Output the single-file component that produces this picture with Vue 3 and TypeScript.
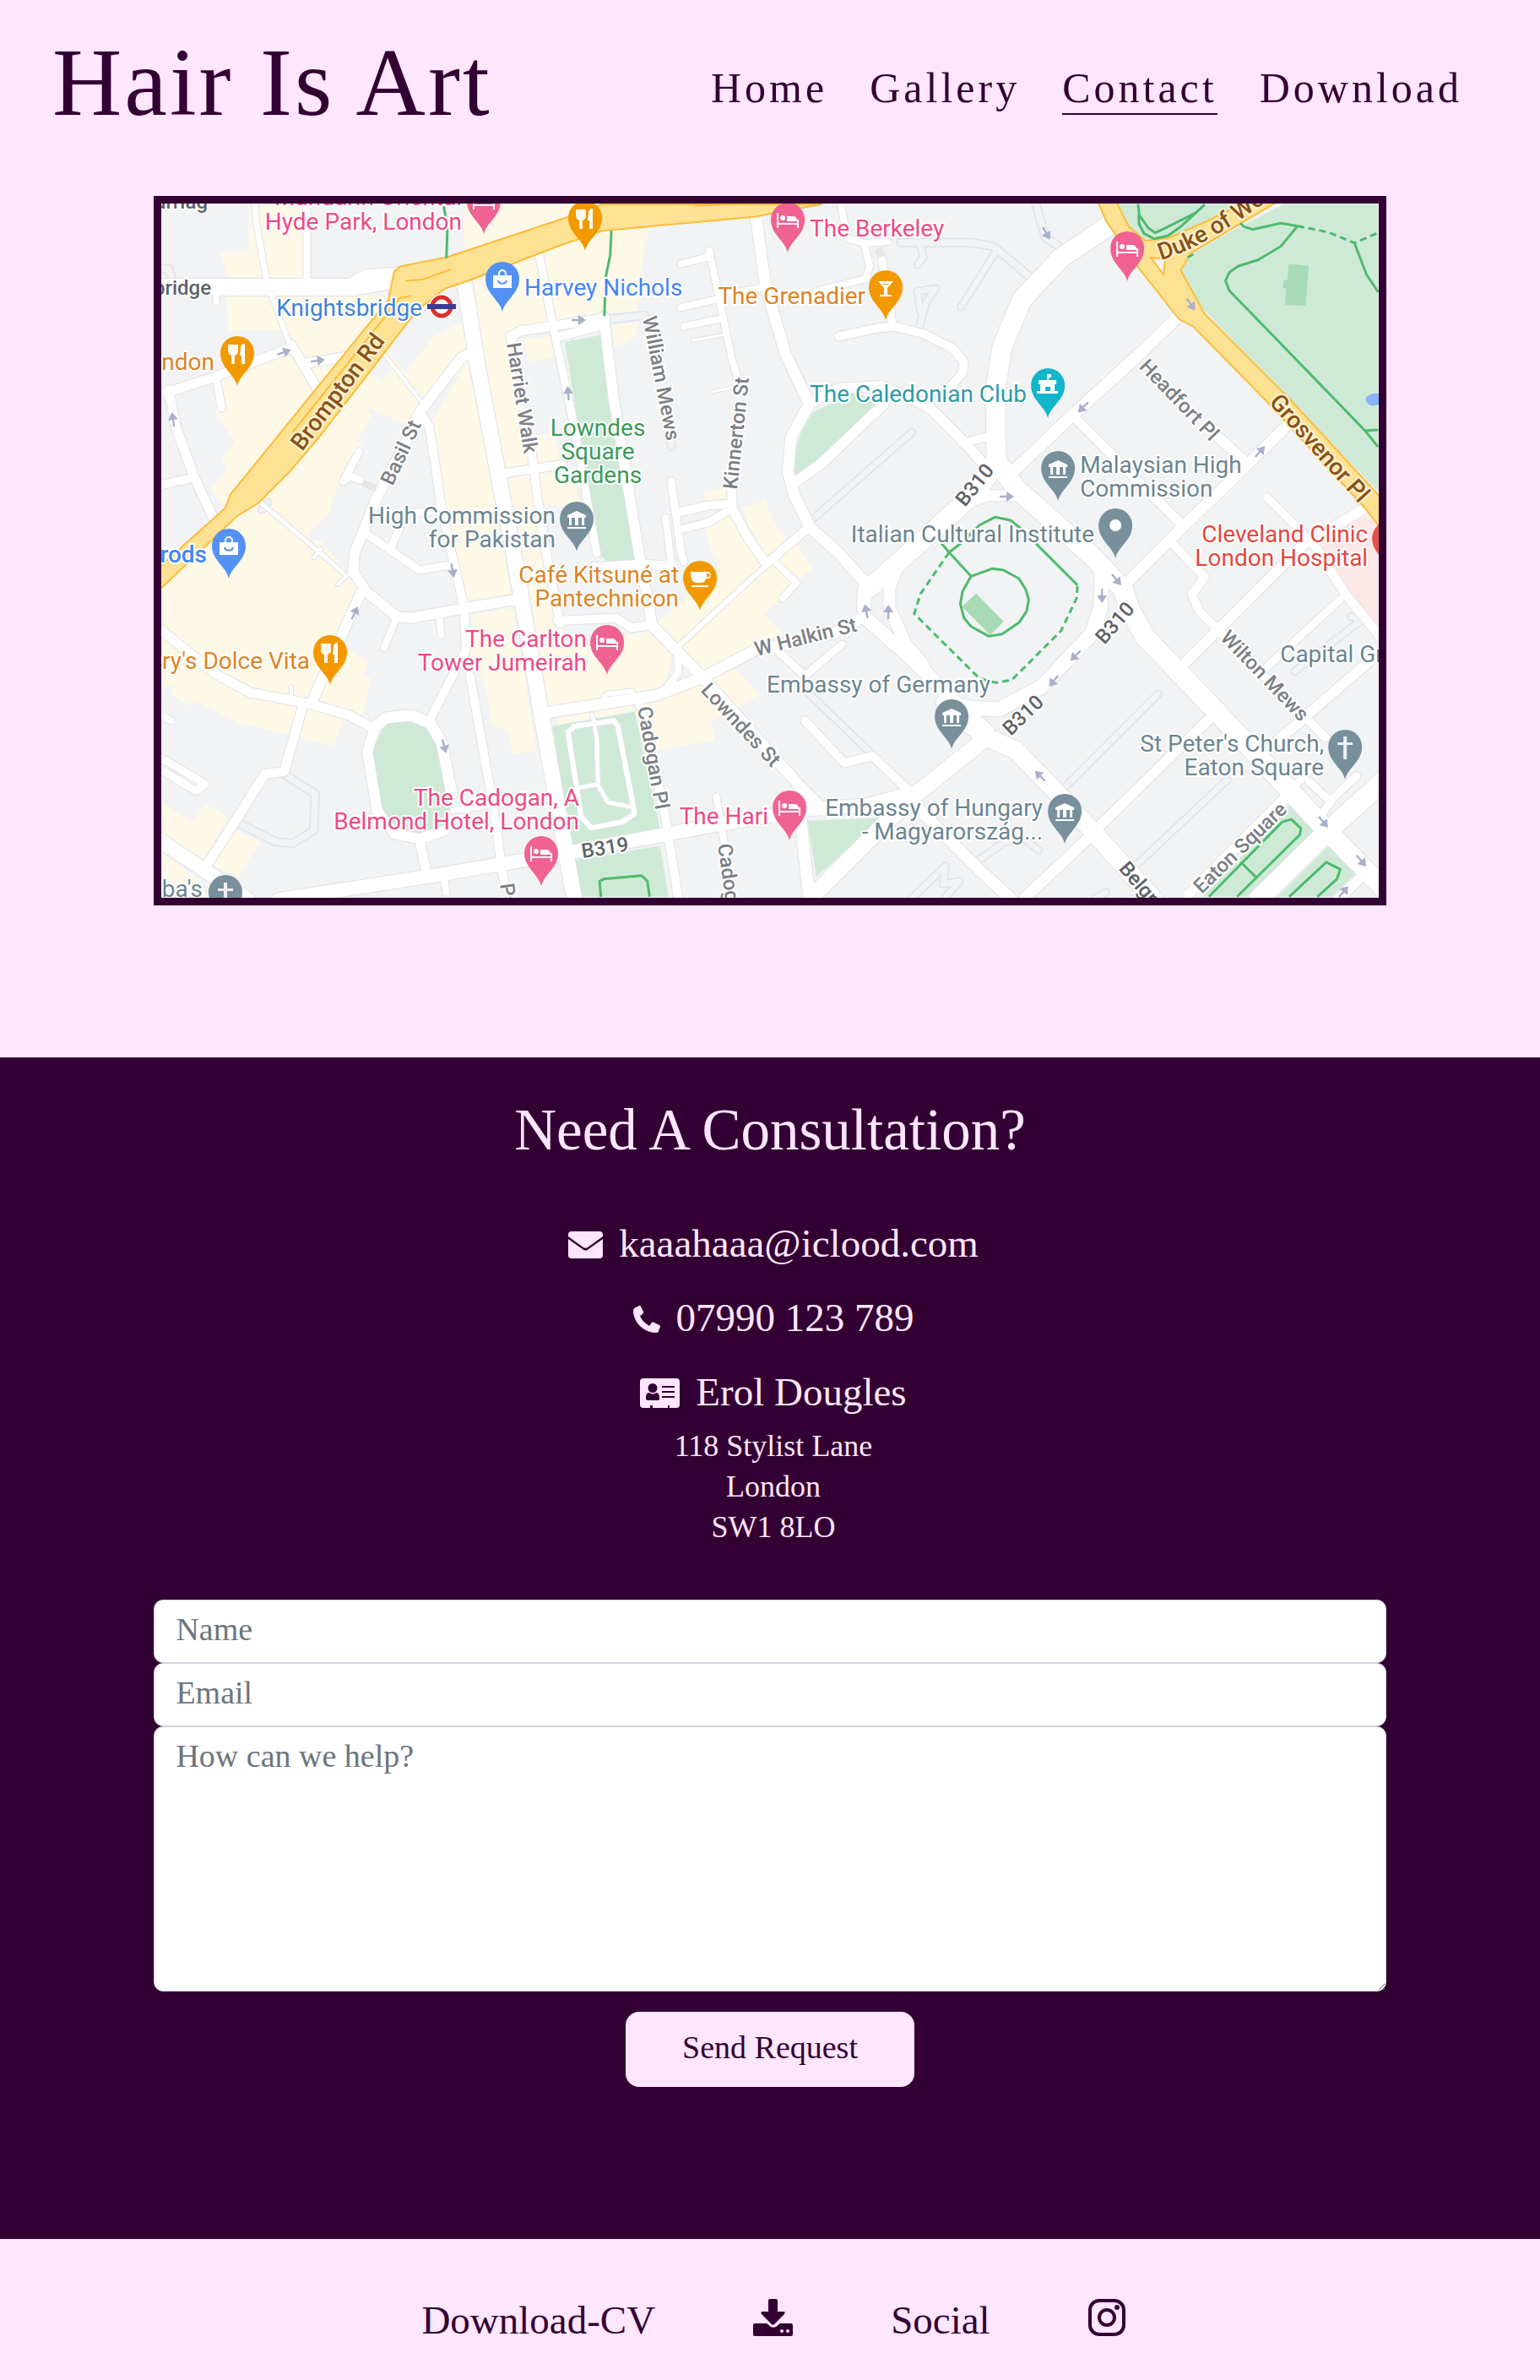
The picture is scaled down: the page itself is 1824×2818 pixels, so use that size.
<script setup lang="ts">
import { reactive } from 'vue'

const navLinks = [
  { label: 'Home', href: '#home', active: false },
  { label: 'Gallery', href: '#gallery', active: false },
  { label: 'Contact', href: '#contact', active: true },
  { label: 'Download', href: '#download', active: false },
]

const form = reactive({ name: '', email: '', message: '' })

/* The map is drafted on six sheets, three sheet units to one map unit. */
type Sheet = 'A' | 'B' | 'C' | 'D' | 'E' | 'F'
const origins: Record<Sheet, [number, number]> = {
  A: [180, 225],
  B: [660, 225],
  C: [1150, 225],
  D: [180, 640],
  E: [660, 640],
  F: [1150, 640],
}

function plot(sheet: Sheet, pts: string): string {
  const [ox, oy] = origins[sheet]
  return pts
    .split(' ')
    .map((pair) => {
      const [x, y] = pair.split(',').map(Number)
      return `${Math.round((ox + x / 3) * 10) / 10},${Math.round((oy + y / 3) * 10) / 10}`
    })
    .join(' ')
}

type Shape = [Sheet, string]
type Road = [Sheet, number, string]

const shops: string[] = ([
  ['A', '345,50 535,50 535,320 400,310 270,310 240,220 345,220'],
  ['A', '265,375 830,375 830,400 260,1130 205,1060 270,990 245,960 295,895 225,790 240,680 490,560 470,500 270,500'],
  ['A', '1110,50 1500,50 1500,95 1110,220'],
  ['A', '830,560 900,650 1000,520 1100,470 1130,600 960,800 900,830 760,770 780,800 730,890 750,910 690,1000 640,1100 635,1140 555,1220 600,1290 100,1290 380,1110 600,850 750,640 820,680 850,640'],
  ['A', '990,830 1120,610 1230,1130 1250,1290 1065,1290 1020,1000'],
  ['A', '1140,310 1370,225 1440,200 1500,200 1500,450 1280,505 1270,540 1360,1000 1260,1005 1180,600'],
  ['A', '1320,530 1420,520 1432,595 1335,610'],
  ['A', '1365,870 1430,865 1450,960 1370,975'],
  ['A', '1265,1020 1430,1000 1450,1120 1380,1120 1420,1290 1290,1290'],
  ['B', '0,110 330,140 310,190 300,280 285,430 0,450'],
  ['B', '195,480 290,470 270,530 200,560'],
  ['B', '-10,1030 65,1020 80,1120 0,1125'],
  ['B', '520,1075 600,1060 600,1110 530,1130'],
  ['B', '655,1130 740,1100 760,1160 810,1240 860,1290 720,1290'],
  ['B', '525,1205 610,1150 700,1290 550,1290'],
  ['D', '36,170 210,0 600,0 745,180 660,360 770,430 750,480 780,490 750,615 680,640 645,730 480,690 310,650 150,570 140,590 65,545 75,515 36,530'],
  ['D', '36,930 145,1000 190,935 270,980 180,1140 36,1050'],
  ['D', '300,1030 385,1070 305,1195 210,1150'],
  ['D', '36,1110 160,1200 200,1265 36,1265'],
  ['D', '1075,0 1245,0 1275,190 1110,215'],
  ['D', '1135,265 1285,240 1365,745 1280,760 1265,675 1205,655 1190,530 1130,400'],
  ['D', '1310,0 1395,0 1440,240 1470,370 1780,320 1850,400 1820,530 1410,600'],
  ['E', '360,270 450,200 500,230 710,95 650,0 540,0 575,70 530,160 450,200'],
  ['E', '540,0 650,0 735,90 850,15 905,100 850,150 735,260 800,330 690,385 510,480 340,300 480,190 590,120'],
  ['E', '300,560 510,490 635,455 720,550 545,640 560,710 360,745'],
  ['E', '0,620 290,570 290,600 0,655'],
] as Shape[]).map(([s, p]) => plot(s, p))

const clinics = [plot('C', '1300,1200 1400,1160 1446,1170 1446,1600 1270,1290 1230,1245'), plot('F', '1230,0 1446,0 1446,320 1330,180')]

const parks: string[] = ([
  ['A', '1470,540 1500,530 1500,700'],
  ['B', '28,540 155,515 275,1320 180,1322 145,1290'],
  ['B', '910,790 1050,720 1150,750 840,1035 838,950 870,850'],
  ['C', '515,50 1060,50 840,110 700,170 620,175 560,130'],
  ['C', '1110,50 1446,50 1446,1070 830,430 745,290 780,230 900,160'],
  ['D', '830,650 920,640 980,660 1020,720 1050,880 1060,970 1020,1030 950,1045 870,1020 815,950 780,750'],
  ['D', '1425,660 1500,645 1500,1090'],
  ['E', '150,0 268,0 275,50 180,78'],
  ['E', '-15,660 275,608 365,1020 45,1085'],
  ['E', '60,1135 365,1085 395,1265 90,1265'],
  ['E', '890,995 1150,985 920,1195'],
  ['F', '1140,925 1235,1025 990,1265 820,1265 1110,970'],
  ['F', '1275,1080 1375,1175 1280,1265 1090,1265'],
] as Shape[]).map(([s, p]) => plot(s, p))

const lawns = [
  plot('C', '1128,262 1200,270 1188,412 1116,408 1120,350 1108,348 1110,322 1124,318'),
  plot('F', '18,188 116,288 68,335 -32,235'),
]

const arterials = [
  plot('A', '0,1362 260,1130 280,1080 840,390 860,290 880,272 1050,238 1480,95 1600,50 2380,50 2140,95 1600,145 1440,200 1130,320 1040,350 940,430 600,870 490,1000 380,1110 300,1160 0,1445'),
  plot('C', '450,40 515,40 560,130 620,180 700,170 840,110 980,40 1090,40 780,225 745,285 830,440 1130,740 1500,1140 1500,1260 1400,1130 1050,750 790,485 740,460 590,270 480,110'),
]
const arterialMarks = [
  plot('A', '900,323 960,318 1062,282'),
  plot('A', '920,375 880,385 500,860'),
  plot('B', '485,56 620,50'),
]

const lanes = ([
  ['A', 9, '410,1110 390,1135'],
  ['A', 9, '36,280 60,280 70,310'],
  ['B', 9, '1220,187 1470,187 1550,200 1680,310'],
  ['B', 8, '1290,190 1300,240 1280,265'],
  ['B', 8, '1560,215 1435,415'],
  ['B', 8, '1285,490 1310,400 1345,350 1280,360 1290,430'],
  ['B', 8, '900,1175 1260,860'],
  ['B', 9, '405,910 402,870'],
  ['B', 9, '180,460 310,445'],
  ['C', 9, '230,50 265,170 330,210'],
  ['D', 9, '470,830 580,900 575,1030 500,1075 440,1070 300,1000'],
  ['E', 8, '890,540 1130,770'],
  ['E', 8, '1260,1270 1380,1155 1370,1220 1430,1210 1380,1265'],
  ['F', 8, '330,880 665,545'],
  ['F', 8, '590,1150 910,850'],
  ['F', 8, '20,1140 120,1070 190,1060 240,1100'],
  ['F', 8, '440,1270 480,1250'],
  ['F', 8, '1150,465 1390,280 1350,270'],
] as Road[]).map(([s, w, p]) => ({ w, d: plot(s, p) }))

const roads = ([
  ['A', 20, '0,345 700,345 860,320'],
  ['A', 11, '720,320 760,300 880,290'],
  ['A', 7, '365,50 370,110 405,310'],
  ['A', 6, '425,375 490,550'],
  ['A', 11, '495,550 590,710'],
  ['A', 8, '550,50 550,320'],
  ['A', 7, '228,370 228,400'],
  ['A', 11, '50,720 220,665 495,560'],
  ['A', 11, '550,615 700,590'],
  ['A', 9, '230,680 248,775'],
  ['A', 11, '60,710 85,840 150,1020 220,1170'],
  ['A', 10, '30,1048 150,1020'],
  ['A', 4, '815,570 960,755'],
  ['A', 5, '380,1105 600,1290 690,1370'],
  ['A', 12, '1120,585 1100,595 950,790 900,900 800,1090 720,1290 715,1355 760,1425 870,1515 920,1520 1110,1485 1290,1455'],
  ['A', 10, '960,800 985,840 1010,1000 1030,1140 1065,1290 1110,1485 1115,1635 985,1885'],
  ['A', 9, '735,930 680,1035 700,1015 740,1030'],
  ['A', 18, '1110,330 1160,640 1245,1090 1280,1260 1380,1845 1500,2515'],
  ['A', 9, '1375,225 1425,485 1500,840 1580,1290'],
  ['A', 11, '1280,545 1275,520 1310,500 1610,455'],
  ['A', 10, '1350,940 1370,1100 1400,1290 1450,1540'],
  ['A', 10, '1260,1005 1460,975'],
  ['A', 9, '1020,1140 900,1150 850,1270'],
  ['A', 9, '760,1220 950,1350 1070,1330'],
  ['B', 10, '10,520 160,480'],
  ['B', 12, '165,450 200,740 290,1290 335,1535'],
  ['B', 11, '410,1335 300,1330 130,1340'],
  ['B', 8, '440,262 540,237 540,215 620,600 650,700'],
  ['B', 8, '440,417 580,385'],
  ['B', 8, '450,485 590,455'],
  ['B', 3, '480,535 600,512'],
  ['B', 3, '545,718 630,700'],
  ['B', 11, '620,1060 620,1130 680,1240 740,1325'],
  ['B', 13, '705,90 740,340 810,580 895,760 830,880 820,1000 840,1080 900,1200 1000,1290 1090,1390'],
  ['B', 12, '835,1045 940,970 1160,760'],
  ['B', 12, '895,760 1000,705 1150,695 1290,755 1330,780 1440,890 1540,1000'],
  ['B', 8, '740,345 600,370'],
  ['B', 8, '1008,50 1030,170 1090,190 1175,183'],
  ['B', 8, '1090,190 1110,270 1095,315 920,360'],
  ['B', 9, '1153,245 1190,470'],
  ['B', 10, '1000,520 1140,490 1200,485 1300,510 1400,560 1445,610 1440,650 1360,740'],
  ['B', 9, '405,1035 440,1290 450,1320'],
  ['B', 8, '385,1165 405,1330'],
  ['B', 10, '430,1145 540,1120 620,1115'],
  ['B', 9, '440,1205 540,1180 620,1130'],
  ['B', 10, '740,1330 890,1200'],
  ['C', 23, '485,130 320,240 180,390 110,560 88,700 88,850 90,960 160,1060 330,1210 440,1310 540,1420 570,1500 620,1590 870,1850 1260,2270 1500,2515'],
  ['C', 14, '730,455 590,590 360,800 160,990'],
  ['C', 11, '370,810 750,1190'],
  ['C', 12, '870,870 980,970'],
  ['C', 13, '1130,830 760,1190 550,1400'],
  ['C', 9, '1050,1090 1200,1240'],
  ['C', 12, '1400,1130 1180,1260 750,1690'],
  ['C', 22, '90,970 20,1070 -250,1315 -370,1420'],
  ['C', 13, '-40,1120 60,1085 200,1085'],
  ['C', 10, '-30,900 80,870'],
  ['D', 11, '36,320 220,470 350,540 560,580 700,620 790,670'],
  ['D', 12, '740,190 570,570'],
  ['D', 11, '535,590 470,820 400,830 300,990 190,1160'],
  ['D', 17, '20,1060 200,1180 340,1275'],
  ['D', 13, '790,665 830,630 920,620 990,650 1030,720 1065,900'],
  ['D', 12, '790,670 765,750 800,960 860,1040 950,1060 1040,1030'],
  ['D', 11, '950,1060 975,1180'],
  ['D', 10, '1130,480 1215,960 1245,1180 1250,1210'],
  ['D', 7, '1070,960 1210,940'],
  ['D', 8, '870,270 825,380'],
  ['D', 8, '1020,270 1028,335'],
  ['D', 8, '20,615 70,640'],
  ['D', 9, '20,765 190,865 155,890 20,805'],
  ['D', 4, '495,520 495,560'],
  ['D', 4, '600,30 575,60'],
  ['D', 4, '700,120 660,155'],
  ['D', 16, '450,1275 1000,1190 1500,1105 2000,1010 2330,955 2540,940 2690,900'],
  ['D', 8, '1040,1210 1045,1250'],
  ['E', 10, '0,285 210,275 260,310 335,300'],
  ['E', 13, '-60,615 0,605 350,550 520,485 700,390 980,330 1090,270'],
  ['E', 6, '160,565 175,545 265,535 275,550'],
  ['E', 13, '335,300 520,490 860,870 950,960'],
  ['E', 8, '425,400 430,470 370,545'],
  ['E', 6, '425,380 740,90'],
  ['E', 8, '775,75 850,150 800,205'],
  ['E', 16, '1110,150 1090,200 1090,270 1270,430 1420,580 1530,680'],
  ['E', 14, '1210,90 1180,170 1180,240 1240,370 1300,440'],
  ['E', 19, '1530,700 1500,720 1250,920 900,1270'],
  ['E', 14, '865,990 895,1270'],
  ['E', 10, '290,570 380,960 430,1270'],
  ['E', 8, '565,910 590,1060 620,1260'],
  ['E', 10, '880,640 1020,790 1120,765 1260,900'],
  ['E', 9, '780,390 880,480 1010,370'],
  ['E', 14, '1250,920 1500,1170 1620,1280'],
  ['E', 5, '70,880 145,865'],
  ['E', 5, '125,620 140,700 145,870 180,930 260,945'],
  ['E', 6, '40,680 60,660 200,640 215,660 275,970 230,1000 120,1020 85,980 38,680'],
  ['F', 17, '465,120 460,240 430,330 250,520 100,600 0,595 -100,575'],
  ['F', 21, '-10,650 60,700 160,745 300,890 430,1030 650,1275'],
  ['F', 12, '430,1040 850,630'],
  ['F', 13, '440,1035 190,1270'],
  ['F', 10, '720,15 830,130 785,190 810,250 880,320 1260,700'],
  ['F', 9, '1050,450 1310,210'],
  ['F', 11, '1210,0 1330,190 1460,350'],
  ['F', 12, '1090,710 1460,390'],
  ['F', 9, '1200,855 1275,925 1370,835'],
  ['F', 9, '1150,870 1210,810'],
  ['F', 9, '1280,925 1240,980'],
  ['F', 23, '1470,850 1270,1030 1020,1275'],
  ['F', 12, '1130,900 770,1260'],
  ['F', 12, '1410,1170 1300,1280'],
] as Road[]).map(([s, w, p]) => ({ w, d: plot(s, p) }))

const trails = [
  plot('A', '1035,50 1050,130 1046,242'),
  plot('B', '192,145 188,230 172,310 167,448'),
  plot('C', '593,50 598,90 630,135 655,152 700,130 800,80'),
  plot('C', '596,90 597,120 615,155 650,173 700,162 745,130 830,52'),
  plot('C', '957,118 970,130 1000,140 1100,118 1160,128 1100,200 1020,248 950,270 918,292 904,322 918,358 1100,545 1400,855 1446,912'),
  plot('C', '1400,855 1446,852'),
  plot('C', '1362,188 1405,300 1446,362'),
  plot('E', '1365,10 1392,42 1470,127 1440,180 1432,225 1445,275 1470,305 1533,340 1580,332 1640,292 1668,250 1675,210 1665,175 1640,135 1585,105 1545,100 1470,127'),
  plot('E', '1392,42 1440,5 1500,-55 1555,-83 1610,-72 1650,-40'),
  plot('F', '230,10 378,158'),
  plot('E', '155,1265 150,1210 165,1202 300,1190 320,1210 328,1265'),
  plot('F', '845,1265 1105,1000 1138,990 1172,1022 1168,1045 945,1265'),
  plot('F', '958,1142 1012,1195'),
  plot('F', '1130,1265 1262,1142 1312,1168 1300,1202 1230,1265'),
]
const dashedTrails = [
  plot('C', '1160,128 1270,150 1362,188 1446,152'),
  plot('C', '790,228 760,245'),
  plot('E', '1392,42 1290,190 1268,260 1500,490 1560,505 1615,495 1790,320 1845,205 1848,158'),
]

const arrows: [number, number, number][] = [
  [336, 417, -20], [376, 427, -8], [205, 497, -98], [685, 379, 0], [673, 466, -95],
  [1239, 276, 60], [1410, 360, 55], [1283, 482, 135], [1492, 535, -48], [1192, 588, 0],
  [420, 726, -65], [536, 675, 80], [526, 883, 75], [1026, 724, -100], [1052, 725, -90],
  [1305, 705, 90], [1322, 686, 50], [1274, 776, 135], [1248, 806, 130], [1232, 919, -135],
  [1567, 973, 50], [1612, 1019, 50], [1591, 1056, -50],
]

type PinKind = 'fork' | 'bed' | 'bag' | 'glass' | 'cup' | 'castle' | 'bank' | 'dot' | 'cross' | 'plus' | 'none'
const orange = '#f29900'
const pink = '#f06292'
const blue = '#5491f5'
const slate = '#78909c'
const pins: { x: number; y: number; kind: PinKind; fill: string }[] = [
  { x: 281, y: 418, kind: 'fork', fill: orange },
  { x: 693, y: 258, kind: 'fork', fill: orange },
  { x: 391, y: 772, kind: 'fork', fill: orange },
  { x: 573, y: 238, kind: 'bed', fill: pink },
  { x: 933, y: 260, kind: 'bed', fill: pink },
  { x: 1335, y: 294, kind: 'bed', fill: pink },
  { x: 719, y: 760, kind: 'bed', fill: pink },
  { x: 641, y: 1010, kind: 'bed', fill: pink },
  { x: 935, y: 956, kind: 'bed', fill: pink },
  { x: 595, y: 330, kind: 'bag', fill: blue },
  { x: 271, y: 646, kind: 'bag', fill: blue },
  { x: 1049, y: 340, kind: 'glass', fill: orange },
  { x: 829, y: 684, kind: 'cup', fill: orange },
  { x: 1241, y: 456, kind: 'castle', fill: '#12b5cb' },
  { x: 683, y: 614, kind: 'bank', fill: slate },
  { x: 1253, y: 554, kind: 'bank', fill: slate },
  { x: 1127, y: 848, kind: 'bank', fill: slate },
  { x: 1261, y: 960, kind: 'bank', fill: slate },
  { x: 1321, y: 622, kind: 'dot', fill: slate },
  { x: 1593, y: 884, kind: 'cross', fill: slate },
  { x: 267, y: 1056, kind: 'plus', fill: slate },
  { x: 1645, y: 637, kind: 'none', fill: '#e0524a' },
]

type Anchor = 'start' | 'middle' | 'end'
const places: { x: number; y: number; at: Anchor; tone: string; text: string }[] = [
  { x: 547, y: 243, at: 'end', tone: 'hotel', text: 'Mandarin Oriental' },
  { x: 547, y: 272, at: 'end', tone: 'hotel', text: 'Hyde Park, London' },
  { x: 500, y: 374, at: 'end', tone: 'station', text: 'Knightsbridge' },
  { x: 254, y: 438, at: 'end', tone: 'food', text: 'London' },
  { x: 621, y: 350, at: 'start', tone: 'shop', text: 'Harvey Nichols' },
  { x: 959, y: 280, at: 'start', tone: 'hotel', text: 'The Berkeley' },
  { x: 1025, y: 360, at: 'end', tone: 'food', text: 'The Grenadier' },
  { x: 959, y: 476, at: 'start', tone: 'sight', text: 'The Caledonian Club' },
  { x: 708, y: 516, at: 'middle', tone: 'park', text: 'Lowndes' },
  { x: 708, y: 544, at: 'middle', tone: 'park', text: 'Square' },
  { x: 708, y: 572, at: 'middle', tone: 'park', text: 'Gardens' },
  { x: 658, y: 620, at: 'end', tone: 'civic', text: 'High Commission' },
  { x: 658, y: 648, at: 'end', tone: 'civic', text: 'for Pakistan' },
  { x: 1279, y: 560, at: 'start', tone: 'civic', text: 'Malaysian High' },
  { x: 1279, y: 588, at: 'start', tone: 'civic', text: 'Commission' },
  { x: 1296, y: 642, at: 'end', tone: 'civic', text: 'Italian Cultural Institute' },
  { x: 1620, y: 642, at: 'end', tone: 'medical', text: 'Cleveland Clinic' },
  { x: 1620, y: 670, at: 'end', tone: 'medical', text: 'London Hospital' },
  { x: 245, y: 666, at: 'end', tone: 'shop strong', text: 'Harrods' },
  { x: 804, y: 690, at: 'end', tone: 'food', text: 'Café Kitsuné at' },
  { x: 804, y: 718, at: 'end', tone: 'food', text: 'Pantechnicon' },
  { x: 695, y: 766, at: 'end', tone: 'hotel', text: 'The Carlton' },
  { x: 695, y: 794, at: 'end', tone: 'hotel', text: 'Tower Jumeirah' },
  { x: 367, y: 792, at: 'end', tone: 'food', text: "ry's Dolce Vita" },
  { x: 686, y: 954, at: 'end', tone: 'hotel', text: 'The Cadogan, A' },
  { x: 686, y: 982, at: 'end', tone: 'hotel', text: 'Belmond Hotel, London' },
  { x: 910, y: 976, at: 'end', tone: 'hotel', text: 'The Hari' },
  { x: 1173, y: 820, at: 'end', tone: 'civic', text: 'Embassy of Germany' },
  { x: 1235, y: 966, at: 'end', tone: 'civic', text: 'Embassy of Hungary' },
  { x: 1235, y: 994, at: 'end', tone: 'civic', text: '- Magyarország...' },
  { x: 1568, y: 890, at: 'end', tone: 'civic', text: "St Peter's Church," },
  { x: 1568, y: 918, at: 'end', tone: 'civic', text: 'Eaton Square' },
  { x: 1516, y: 784, at: 'start', tone: 'civic', text: 'Capital Gr' },
  { x: 240, y: 1062, at: 'end', tone: 'civic', text: "ba's" },
]

const streets: { x: number; y: number; r: number; tone: string; text: string }[] = [
  { x: 358, y: 535, r: -53, tone: 'main', text: 'Brompton Rd' },
  { x: 1502, y: 477, r: 48, tone: 'main', text: 'Grosvenor Pl' },
  { x: 465, y: 576, r: -65, tone: 'side', text: 'Basil St' },
  { x: 600, y: 407, r: 81, tone: 'side', text: 'Harriet Walk' },
  { x: 761, y: 376, r: 79, tone: 'side', text: 'William Mews' },
  { x: 873, y: 580, r: -84, tone: 'side', text: 'Kinnerton St' },
  { x: 1348, y: 435, r: 46, tone: 'side', text: 'Headfort Pl' },
  { x: 896, y: 777, r: -14, tone: 'side', text: 'W Halkin St' },
  { x: 829, y: 818, r: 47, tone: 'side', text: 'Lowndes St' },
  { x: 755, y: 838, r: 80, tone: 'side', text: 'Cadogan Pl' },
  { x: 850, y: 1000, r: 82, tone: 'side', text: 'Cadogan' },
  { x: 592, y: 1047, r: 82, tone: 'side', text: 'Pavilion' },
  { x: 1444, y: 756, r: 46, tone: 'side', text: 'Wilton Mews' },
  { x: 1423, y: 1059, r: -44, tone: 'side', text: 'Eaton Square' },
  { x: 1324, y: 1029, r: 49, tone: 'route', text: 'Belgrave' },
  { x: 690, y: 1016, r: -9, tone: 'route', text: 'B319' },
  { x: 1143, y: 601, r: -51, tone: 'route', text: 'B310' },
  { x: 1308, y: 764, r: -49, tone: 'route', text: 'B310' },
  { x: 1197, y: 872, r: -44, tone: 'route', text: 'B310' },
]
</script>

<template>
  <div class="page">
    <header class="top">
      <h1 class="brand">Hair Is Art</h1>
      <nav class="nav" aria-label="Main">
        <a v-for="link in navLinks" :key="link.label" :href="link.href" :class="['nav-link', { active: link.active }]">{{ link.label }}</a>
      </nav>
    </header>

    <main>
      <section class="map" aria-label="Map of Knightsbridge and Belgravia">
        <svg class="map-art" viewBox="191 241 1441 822" preserveAspectRatio="xMidYMid slice">
          <rect x="191" y="241" width="1442" height="822" fill="#f1f3f4" />
          <polygon v-for="(p, i) in shops" :key="'s' + i" :points="p" fill="#fef8e7" />
          <polygon v-for="(p, i) in clinics" :key="'c' + i" :points="p" fill="#fce8e6" />
          <polygon v-for="(p, i) in parks" :key="'p' + i" :points="p" fill="#ceead6" />
          <polygon v-for="(p, i) in lawns" :key="'l' + i" :points="p" fill="#a8dab5" />
          <path d="M1633 466c-9-1-15 2-16 7 2 7 8 9 16 6z" fill="#8ab4f8" />

          <g fill="none" stroke-linecap="round" stroke-linejoin="round">
            <polyline v-for="(l, i) in lanes" :key="'lc' + i" :points="l.d" stroke="#e0e2e5" :stroke-width="l.w + 2" />
            <polyline v-for="(l, i) in lanes" :key="'lf' + i" :points="l.d" stroke="#f1f3f4" :stroke-width="l.w - 1" />
            <polyline v-for="(l, i) in roads" :key="'rc' + i" :points="l.d" stroke="#e0e2e5" :stroke-width="l.w + 2" />
            <polyline v-for="(l, i) in roads" :key="'rf' + i" :points="l.d" stroke="#ffffff" :stroke-width="l.w" />
            <polyline points="430,572 446,578" stroke="#e6e6e6" stroke-width="8" stroke-linecap="butt" />
            <polyline points="1040,294 1044,304" stroke="#e6e6e6" stroke-width="9" stroke-linecap="butt" />
          </g>

          <polygon v-for="(p, i) in arterials" :key="'a' + i" :points="p" fill="#fde293" stroke="#fbbc3a" stroke-width="2" />
          <polygon points="1363,305 1380,307 1378,325" fill="#f1f3f4" stroke="#fbbc3a" stroke-width="2" />
          <g fill="none" stroke="#fbbc3a" stroke-width="2">
            <polyline v-for="(p, i) in arterialMarks" :key="'am' + i" :points="p" />
          </g>
          <g fill="none" stroke="#4fba6f" stroke-width="3" stroke-linejoin="round">
            <polyline v-for="(p, i) in trails" :key="'t' + i" :points="p" />
            <polyline v-for="(p, i) in dashedTrails" :key="'d' + i" :points="p" stroke-dasharray="8 5" />
          </g>

          <g v-for="(a, i) in arrows" :key="'ar' + i" :transform="`translate(${a[0]} ${a[1]}) rotate(${a[2]})`">
            <path d="M-8-1.2H0V-6L9 0 0 6V1.2H-8z" fill="#a9b0cc" />
          </g>

          <text class="label route" x="246" y="247" text-anchor="end">Carriag</text>
          <text class="label route" x="250" y="349" text-anchor="end">bridge</text>
          <text v-for="(s, i) in streets" :key="'st' + i" :class="['label', s.tone]" :transform="`translate(${s.x} ${s.y}) rotate(${s.r})`">{{ s.text }}</text>
          <path id="duke-curve" d="M1375 308Q1438 290 1542 206" fill="none" />
          <text class="label main"><textPath href="#duke-curve">Duke of Wellington</textPath></text>

          <g>
            <circle cx="523" cy="363" r="15" fill="#ffffff" />
            <circle cx="523" cy="363" r="11" fill="#ffffff" stroke="#dc322b" stroke-width="5" />
            <rect x="506" y="360" width="34" height="6" fill="#3a3d96" />
          </g>

          <g v-for="(p, i) in pins" :key="'pin' + i" :transform="`translate(${p.x} ${p.y})`">
            <path d="M0 39C-3 25-20 18-20 0a20 20 0 1 1 40 0C20 18 3 25 0 39z" :fill="p.fill" />
            <g v-if="p.kind === 'fork'" fill="#fff">
              <path d="M-11-10h12v8c0 3-2 4-4 5v10h-4V3c-2-1-4-2-4-5z" fill-opacity=".92" />
              <path d="M4-6c0-3 2-5 5-5v24H5V3H3z" />
            </g>
            <g v-else-if="p.kind === 'bed'" fill="#fff">
              <path d="M-13-8h2V4h22V0h2v10h-2V6h-22v4h-2z" />
              <circle cx="-6" cy="-2" r="3" />
              <path d="M-9 2h20V1c0-4-3-5-6-5h-6v6z" />
            </g>
            <g v-else-if="p.kind === 'bag'">
              <path d="M-11-4h22v15h-22z" fill="#fff" />
              <path d="M-4-4v-2a4 4 0 0 1 8 0v2" fill="none" stroke="#fff" stroke-width="2" />
              <path d="M-5 2c1 5 9 5 10 0" fill="none" stroke="#5491f5" stroke-width="2" />
            </g>
            <path v-else-if="p.kind === 'glass'" d="M-9-7H9L2 1v8h5v2H-7V9h5V1zM-4-4l1 1h6l1-1z" fill="#fff" fill-rule="evenodd" />
            <g v-else-if="p.kind === 'cup'" fill="#fff">
              <path d="M-11-7H9c5 0 5 8 0 8H7C6 5 4 6 1 6h-5c-5 0-7-5-7-13zM8-5v4h2c2 0 2-4 0-4z" fill-rule="evenodd" />
              <path d="M-10 9h20v2h-20z" />
            </g>
            <path v-else-if="p.kind === 'castle'" d="M-1-13h5v4H1v3h9v5H8v8h4v3h-25V7h4v-8h-2v-5h10zM-3 2v5h6V2z" fill="#fff" fill-rule="evenodd" />
            <path v-else-if="p.kind === 'bank'" d="M0-9L11-4v3h-2v9h-3v-9H2v9h-4v-9h-4v9h-3v-9h-2v-3zM-11 10h22v2h-22z" fill="#fff" />
            <circle v-else-if="p.kind === 'dot'" r="7" fill="#fff" />
            <path v-else-if="p.kind === 'cross'" d="M-2-12h4v7h7v3H2v17h-4V-2h-7v-3h7z" fill="#eef2f4" />
            <path v-else-if="p.kind === 'plus'" d="M-2-11h4v7h7v3H2v8h-4v-8h-7v-3h7z" fill="#eef2f4" />
          </g>

          <text v-for="(p, i) in places" :key="'pl' + i" :class="['label', p.tone]" :x="p.x" :y="p.y" :text-anchor="p.at">{{ p.text }}</text>
        </svg>
      </section>

      <section class="consult">
        <h2 class="consult-title">Need A Consultation?</h2>
        <address class="contact">
          <p class="contact-row">
            <svg class="icon-mail" viewBox="0 0 41 32" aria-hidden="true">
              <path d="M4 0h33a4 4 0 0 1 4 4v2L23 19c-2 1-3 1-5 0L0 6V4a4 4 0 0 1 4-4z" />
              <path d="M0 9l17 12c2 2 5 2 7 0L41 9v19a4 4 0 0 1-4 4H4a4 4 0 0 1-4-4z" />
            </svg>
            <span>kaaahaaa@iclood.com</span>
          </p>
          <p class="contact-row">
            <svg class="icon-phone" viewBox="0 0 32 32" aria-hidden="true">
              <path d="M3 2l4-2c1 0 2 0 2 1l3 6c0 1 0 2-1 3l-3 2c2 5 6 9 11 12l3-4c1-1 2-1 3 0l6 3c1 1 1 1 1 2l-2 5c0 1-1 2-3 2C12 32 0 19 0 6c0-2 1-3 3-4z" />
            </svg>
            <span>07990 123 789</span>
          </p>
          <p class="contact-row">
            <svg class="icon-card" viewBox="0 0 47 35" aria-hidden="true">
              <path fill-rule="evenodd" d="M4 0h39a4 4 0 0 1 4 4v27a4 4 0 0 1-4 4h-8v-3h-2v3H15v-3h-3v3H4a4 4 0 0 1-4-4V4a4 4 0 0 1 4-4zM15 6a5 5 0 1 0 0 11 5 5 0 1 0 0-11zM11 17c-3 0-4 3-4 5v2c0 1 1 2 2 2h12c2 0 2-1 2-2v-2c0-2-1-5-4-5-3 2-5 2-8 0zM26 9v2h15V9zM26 15v2h15v-2zM26 21v2h15v-2z" />
            </svg>
            <span>Erol Dougles</span>
          </p>
          <p class="street">118 Stylist Lane<br />London<br />SW1 8LO</p>
        </address>

        <form class="form" @submit.prevent>
          <input v-model="form.name" class="field" type="text" name="name" placeholder="Name" aria-label="Name" />
          <input v-model="form.email" class="field" type="email" name="email" placeholder="Email" aria-label="Email" />
          <textarea v-model="form.message" class="field message" name="message" placeholder="How can we help?" aria-label="How can we help?"></textarea>
          <button class="send" type="submit">Send Request</button>
        </form>
      </section>
    </main>

    <footer class="foot">
      <span>Download-CV</span>
      <a class="foot-icon" href="#download" aria-label="Download CV">
        <svg class="icon-download" viewBox="0 0 47 44" aria-hidden="true">
          <path d="M20 0h7c1 0 2 1 2 2v13h7c2 0 2 1 1 3L25 30c-1 1-2 1-3 0L10 18c-1-2-1-3 1-3h7V2c0-1 1-2 2-2z" />
          <path fill-rule="evenodd" d="M2 29h14l5 4c2 1 4 1 6 0l5-4h13c1 0 2 1 2 2v11c0 1-1 2-2 2H2c-1 0-2-1-2-2V31c0-1 1-2 2-2zM34 36a2 2 0 1 0 0 4 2 2 0 1 0 0-4zM41 36a2 2 0 1 0 0 4 2 2 0 1 0 0-4z" />
        </svg>
      </a>
      <span>Social</span>
      <a class="foot-icon" href="#instagram" aria-label="Instagram">
        <svg class="icon-insta" viewBox="0 0 44 44" aria-hidden="true">
          <rect x="2" y="2" width="40" height="40" rx="11" fill="none" stroke="currentColor" stroke-width="4" />
          <circle cx="22" cy="22" r="9" fill="none" stroke="currentColor" stroke-width="4" />
          <circle cx="34" cy="10" r="3" />
        </svg>
      </a>
    </footer>
  </div>
</template>

<style>
body {
  margin: 0;
  background: #ffe6ff;
}
</style>

<style scoped>
.page {
  font-family: 'Liberation Serif', serif;
  color: #330033;
  background: #ffe6ff;
}

.top {
  display: flex;
  align-items: center;
  justify-content: space-between;
  min-height: 196px;
  padding: 0 92px 0 62px;
  box-sizing: border-box;
}

.brand {
  margin: 0;
  font-size: 114px;
  font-weight: 400;
  line-height: 132px;
  letter-spacing: 3px;
}

.nav {
  display: flex;
  gap: 50px;
  margin-top: 14px;
}

.nav-link {
  font-size: 50px;
  line-height: 60px;
  letter-spacing: 4px;
  color: inherit;
  text-decoration: none;
  border-bottom: 2px solid transparent;
}

.nav-link.active {
  border-bottom-color: #330033;
}

.map {
  width: 80%;
  margin: 36px auto 180px;
  border: 9px solid #330033;
  box-sizing: border-box;
}

.map-art {
  display: block;
  width: 100%;
}

.label {
  font-family: Roboto, sans-serif;
  font-size: 28px;
  paint-order: stroke;
  stroke: #ffffff;
  stroke-width: 4px;
  stroke-linejoin: round;
}

.strong {
  font-weight: 500;
}

.hotel {
  fill: #ee4a84;
}

.food {
  fill: #dd8426;
}

.shop {
  fill: #4285f4;
}

.station {
  fill: #4082d8;
}

.sight {
  fill: #2f9ba6;
}

.park {
  fill: #3b9a58;
}

.civic {
  fill: #6c8591;
}

.medical {
  fill: #e2473f;
}

.side {
  font-size: 24px;
  font-weight: 500;
  fill: #7c8085;
}

.route {
  font-size: 24px;
  font-weight: 500;
  fill: #5f6368;
}

.main {
  font-weight: 500;
  fill: #8a5216;
  stroke: #fef3d3;
}

.consult {
  padding: 44px 0 180px;
  color: #ffe6ff;
  background: #330033;
}

.consult-title {
  margin: 0 0 64px;
  font-size: 69px;
  font-weight: 400;
  line-height: 84px;
  text-align: center;
}

.contact {
  display: flex;
  flex-direction: column;
  align-items: center;
  gap: 32px;
  padding-left: 8px;
  font-style: normal;
}

.contact-row {
  display: flex;
  align-items: center;
  gap: 19px;
  margin: 0;
  font-size: 47px;
  line-height: 56px;
}

.contact-row svg,
.foot svg {
  display: block;
  fill: currentColor;
}

.contact-row svg {
  margin-top: 3px;
}

.icon-mail {
  width: 41px;
  height: 32px;
}

.icon-phone {
  width: 32px;
  height: 32px;
}

.icon-card {
  width: 47px;
  height: 35px;
}

.street {
  margin: -20px 0 0;
  font-size: 36px;
  line-height: 48px;
  text-align: center;
}

.form {
  display: flex;
  flex-direction: column;
  align-items: center;
  width: 80%;
  margin: 62px auto 0;
}

.field {
  width: 100%;
  height: 75px;
  box-sizing: border-box;
  margin: 0;
  padding: 4px 25px 10px;
  border: 1px solid #ced4da;
  border-radius: 11px;
  background: #ffffff;
  color: #212529;
  font-family: inherit;
  font-size: 38px;
  line-height: 56px;
}

.field::placeholder {
  color: #6c757d;
  opacity: 1;
}

.message {
  display: block;
  height: 314px;
  padding-top: 6px;
  resize: vertical;
}

.send {
  margin-top: 24px;
  width: 342px;
  height: 89px;
  padding: 0 0 6px;
  border: 0;
  border-radius: 16px;
  background: #ffe6ff;
  color: #330033;
  font-family: inherit;
  font-size: 38px;
}

.foot {
  display: flex;
  align-items: center;
  justify-content: center;
  gap: 116px;
  padding: 68px 0 42px 8px;
  font-size: 47px;
  line-height: 56px;
}

.foot-icon {
  margin-bottom: 6px;
  color: inherit;
}

.icon-download {
  width: 47px;
  height: 44px;
}

.icon-insta {
  width: 44px;
  height: 44px;
}
</style>
